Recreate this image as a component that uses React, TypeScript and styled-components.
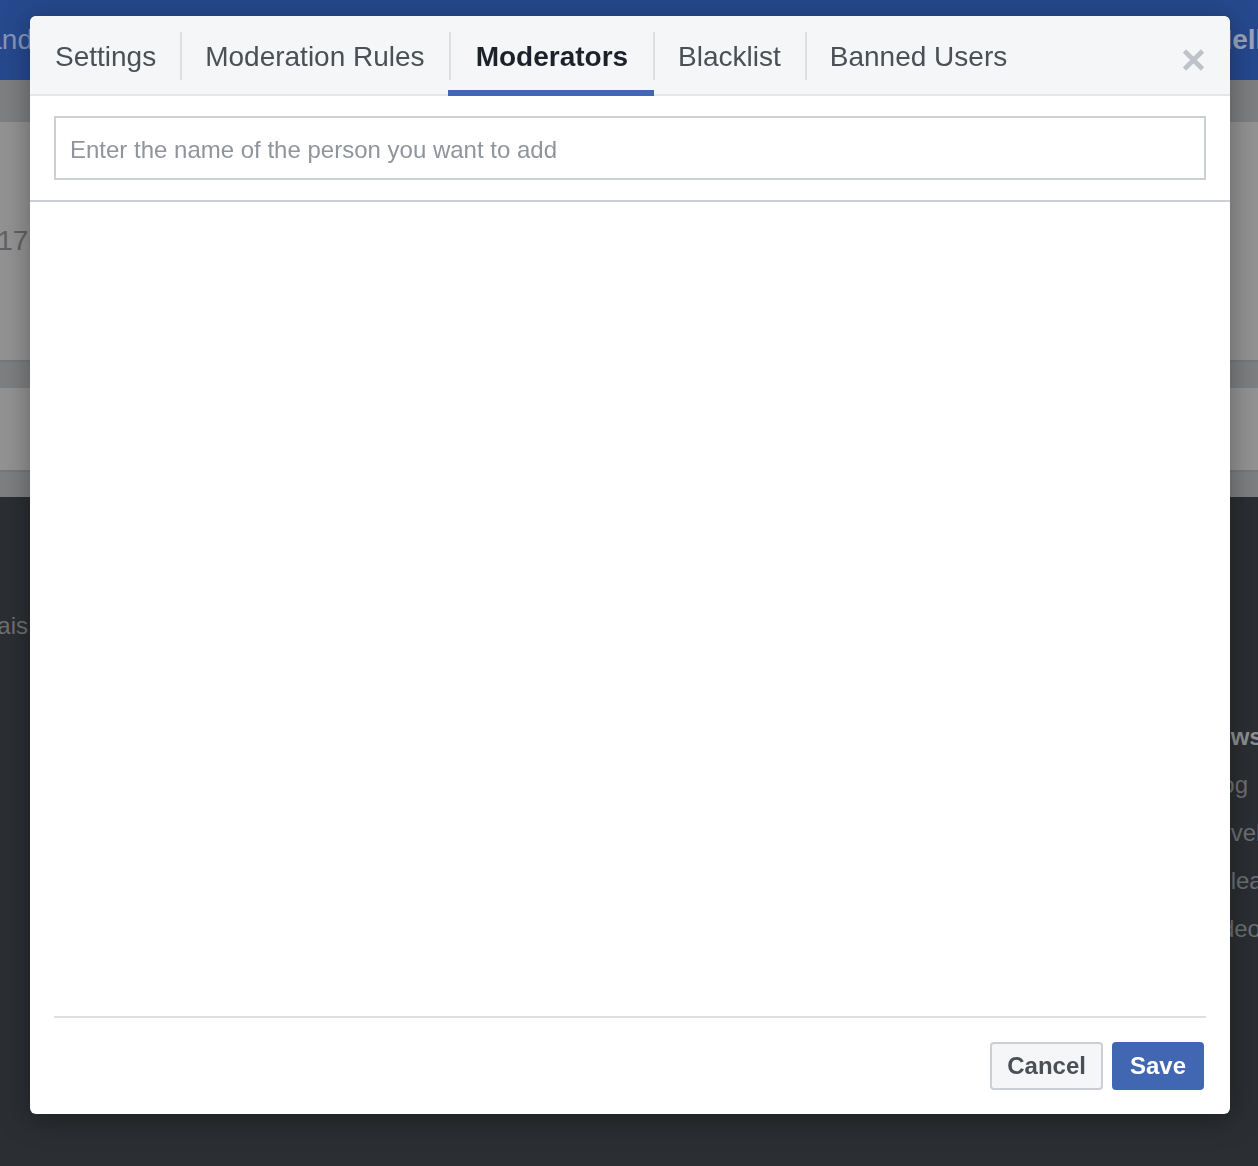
import React from "react";
import styled, { createGlobalStyle, css } from "styled-components";

const GlobalStyle = createGlobalStyle`
  html, body {
    margin: 0;
    padding: 0;
    overflow: hidden;
    background: #2b2e32;
  }
  body {
    font-family: "Liberation Sans", Arial, Helvetica, sans-serif;
    -webkit-font-smoothing: antialiased;
  }
  * { box-sizing: border-box; }
`;

const tabs = ["Settings", "Moderation Rules", "Moderators", "Blacklist", "Banned Users"];
const footerLinks = ["Blog", "Developers", "Release", "Video"];

/* ---------- dimmed page behind the dialog ---------- */

const Page = styled.div`
  width: 100%;
  min-height: 1166px;
  display: flex;
  flex-direction: column;
`;

const Row = styled.div<{ $height: number; $bg: string; $left?: number; $right?: number }>`
  height: ${(p) => p.$height}px;
  background: ${(p) => p.$bg};
  display: grid;
  grid-template-columns: ${(p) => p.$left ?? 40}px 1fr ${(p) => p.$right ?? 46}px;
  align-items: center;
  overflow: hidden;
`;

const LeftEdge = styled.div<{ $color: string }>`
  display: flex;
  justify-content: flex-end;
  white-space: nowrap;
  font-size: 28px;
  color: ${(p) => p.$color};
`;

const RightEdge = styled.div<{ $color: string; $bold?: boolean }>`
  white-space: nowrap;
  font-size: 28px;
  color: ${(p) => p.$color};
  font-weight: ${(p) => (p.$bold ? 700 : 400)};
`;

const Divider = styled.div`
  height: 2px;
  background: #77787a;
`;

const Footer = styled.div`
  flex: 1;
  background: #2b2e32;
  display: grid;
  grid-template-columns: 28px 1fr 58px;
  align-items: start;
  overflow: hidden;
`;

const FooterLeft = styled.div`
  display: flex;
  justify-content: flex-end;
  white-space: nowrap;
  margin-top: 115px;
  font-size: 24px;
  color: #6d7074;
`;

const FooterList = styled.ul`
  grid-column: 3;
  list-style: none;
  margin: 216px 0 0;
  padding: 0;
  display: flex;
  flex-direction: column;
  white-space: nowrap;
`;

const FooterItem = styled.li<{ $heading?: boolean }>`
  height: 48px;
  line-height: 48px;
  font-size: 24px;
  color: ${(p) => (p.$heading ? "#8d9094" : "#6d7074")};
  font-weight: ${(p) => (p.$heading ? 700 : 400)};
`;

/* ---------- dialog ---------- */

const Dialog = styled.div`
  position: fixed;
  top: 16px;
  left: 30px;
  width: 1200px;
  height: 1098px;
  background: #fff;
  border-radius: 6px;
  box-shadow: 0 4px 30px rgba(0, 0, 0, 0.35);
  display: flex;
  flex-direction: column;
  overflow: hidden;
`;

const Header = styled.div`
  height: 80px;
  flex: none;
  display: flex;
  align-items: stretch;
  background: #f5f6f7;
  border-bottom: 2px solid #e5e6e9;
  border-radius: 6px 6px 0 0;
`;

const Tab = styled.div<{ $active?: boolean; $first?: boolean }>`
  position: relative;
  display: flex;
  align-items: center;
  padding: 4px 24px 0 25px;
  font-size: 28px;
  color: #4b4f56;
  white-space: nowrap;
  ${(p) =>
    !p.$first &&
    css`
      &::before {
        content: "";
        position: absolute;
        left: 0;
        top: 16px;
        height: 48px;
        width: 2px;
        background: #dddfe2;
      }
    `}
  ${(p) =>
    p.$active &&
    css`
      padding: 4px 25px 0 27px;
      font-weight: 700;
      color: #1d2129;
      &::after {
        content: "";
        position: absolute;
        left: -1px;
        right: -1px;
        bottom: -2px;
        height: 6px;
        background: #4267b2;
      }
    `}
`;

const CloseButton = styled.button`
  margin: 33px 25px 0 auto;
  align-self: flex-start;
  width: 23px;
  height: 22px;
  padding: 0;
  border: 0;
  background: none;
  display: flex;
  cursor: pointer;
`;

const SearchArea = styled.div`
  flex: none;
  padding: 20px 24px;
  border-bottom: 2px solid #ccd0d5;
`;

const SearchInput = styled.input`
  width: 100%;
  height: 64px;
  border: 2px solid #ccd0d5;
  padding: 4px 14px 0;
  font-family: inherit;
  font-size: 24px;
  color: #1d2129;
  outline: none;
  &::placeholder {
    color: #90949c;
  }
`;

const Body = styled.div`
  flex: 1;
`;

const Footerbar = styled.div`
  flex: none;
  margin: 0 24px;
  padding: 24px 2px 24px 0;
  border-top: 2px solid #dddfe2;
  display: flex;
  justify-content: flex-end;
  gap: 9px;
`;

const Button = styled.button<{ $primary?: boolean }>`
  height: 48px;
  padding: 0 ${(p) => (p.$primary ? 16 : 15)}px;
  border-radius: 4px;
  font-family: inherit;
  font-size: 24px;
  font-weight: 700;
  cursor: pointer;
  border: 2px solid ${(p) => (p.$primary ? "#4267b2" : "#ccd0d5")};
  background: ${(p) => (p.$primary ? "#4267b2" : "#f5f6f7")};
  color: ${(p) => (p.$primary ? "#fff" : "#4b4f56")};
`;

const CloseIcon = () => (
  <svg width="23" height="22" viewBox="0 0 23 22">
    <path d="M2.5 2 L20.5 20 M20.5 2 L2.5 20" stroke="#bec2c9" strokeWidth="4.6" />
  </svg>
);

export default function App() {
  return (
    <>
      <GlobalStyle />
      <Page>
        <Row $height={80} $bg="#26498f" $left={33}>
          <LeftEdge $color="#8796b8">Brand</LeftEdge>
          <span />
          <RightEdge $color="#9aa5bd" $bold>
            Hello
          </RightEdge>
        </Row>
        <Row $height={42} $bg="#7e7f81" />
        <Row $height={238} $bg="#939393" $left={44}>
          <LeftEdge $color="#626264">5176</LeftEdge>
        </Row>
        <Divider />
        <Row $height={26} $bg="#7e7f81" />
        <Row $height={82} $bg="#939393" />
        <Divider />
        <Row $height={25} $bg="#7e7f81" />
        <Footer>
          <FooterLeft>Français</FooterLeft>
          <FooterList>
            <FooterItem $heading>News</FooterItem>
            {footerLinks.map((l) => (
              <FooterItem key={l}>{l}</FooterItem>
            ))}
          </FooterList>
        </Footer>
      </Page>

      <Dialog role="dialog">
        <Header>
          {tabs.map((t, i) => (
            <Tab key={t} $first={i === 0} $active={t === "Moderators"}>
              {t}
            </Tab>
          ))}
          <CloseButton aria-label="Close">
            <CloseIcon />
          </CloseButton>
        </Header>
        <SearchArea>
          <SearchInput placeholder="Enter the name of the person you want to add" />
        </SearchArea>
        <Body />
        <Footerbar>
          <Button>Cancel</Button>
          <Button $primary>Save</Button>
        </Footerbar>
      </Dialog>
    </>
  );
}
